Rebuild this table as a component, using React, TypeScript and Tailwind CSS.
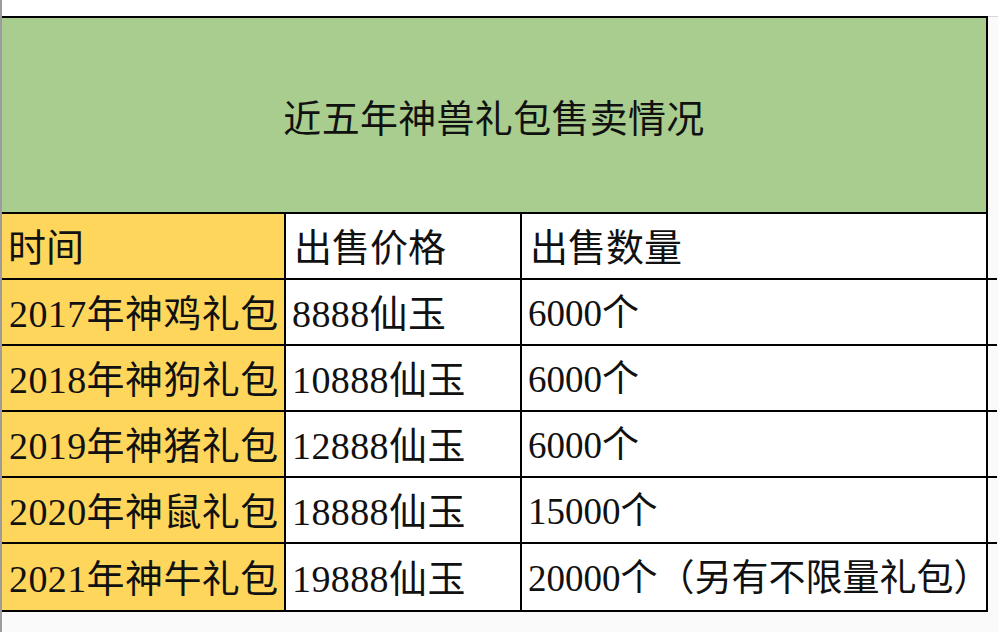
import React from "react";

const rows: [string, string, string][] = [
  ["2017年神鸡礼包", "8888仙玉", "6000个"],
  ["2018年神狗礼包", "10888仙玉", "6000个"],
  ["2019年神猪礼包", "12888仙玉", "6000个"],
  ["2020年神鼠礼包", "18888仙玉", "15000个"],
  ["2021年神牛礼包", "19888仙玉", "20000个（另有不限量礼包）"],
];

const font = {
  fontFamily: '"Liberation Serif", "Noto Sans CJK SC", serif',
};

export default function App() {
  return (
    <div
      className="w-[998px] h-[632px] bg-[#fafafa] border-l-2 border-[#9c9c9c] overflow-hidden text-[#111]"
      style={font}
    >
      <div className="h-[16px] bg-white" />
      <div className="flex">
        <div className="w-[986px] border-t-2 border-r-2 border-b-2 border-black">
          <div className="h-[196px] bg-[#a8cd8e] border-b-2 border-black flex items-center justify-center pt-[8px] text-[38px] leading-none tracking-[0.3px]">
            近五年神兽礼包售卖情况
          </div>
          <div className="grid grid-cols-[284px_236px_1fr] bg-white">
            <div className="h-[66px] bg-[#fed65c] border-r-2 border-b-2 border-black flex items-center px-[6px] pt-[3px] text-[38px] leading-none whitespace-nowrap">
              时间
            </div>
            <div className="h-[66px] border-r-2 border-b-2 border-black flex items-center px-[8px] pt-[3px] text-[38px] leading-none whitespace-nowrap">
              出售价格
            </div>
            <div className="h-[66px] border-b-2 border-black flex items-center px-[8px] pt-[3px] text-[38px] leading-none whitespace-nowrap">
              出售数量
            </div>
            {rows.map((r, i) => {
              const last = i === rows.length - 1;
              return (
                <React.Fragment key={i}>
                  <div
                    className={
                      "h-[66px] bg-[#fed65c] border-r-2 border-black flex items-center px-[7px] pt-[3px] text-[38px] leading-none whitespace-nowrap tracking-[0.4px] " +
                      (last ? "" : "border-b-2")
                    }
                  >
                    {r[0]}
                  </div>
                  <div
                    className={
                      "h-[66px] border-r-2 border-black flex items-center px-[6px] pt-[3px] text-[38px] leading-none whitespace-nowrap tracking-[0.4px] " +
                      (last ? "" : "border-b-2")
                    }
                  >
                    {r[1]}
                  </div>
                  <div
                    className={
                      "h-[66px] border-black flex items-center px-[6px] pt-[3px] text-[37px] leading-none whitespace-nowrap " +
                      (last ? "" : "border-b-2")
                    }
                  >
                    {r[2]}
                  </div>
                </React.Fragment>
              );
            })}
          </div>
        </div>
        <div className="flex-1 flex flex-col">
          <div className="h-px bg-[#d8d8d8]" />
        </div>
      </div>
    </div>
  );
}
